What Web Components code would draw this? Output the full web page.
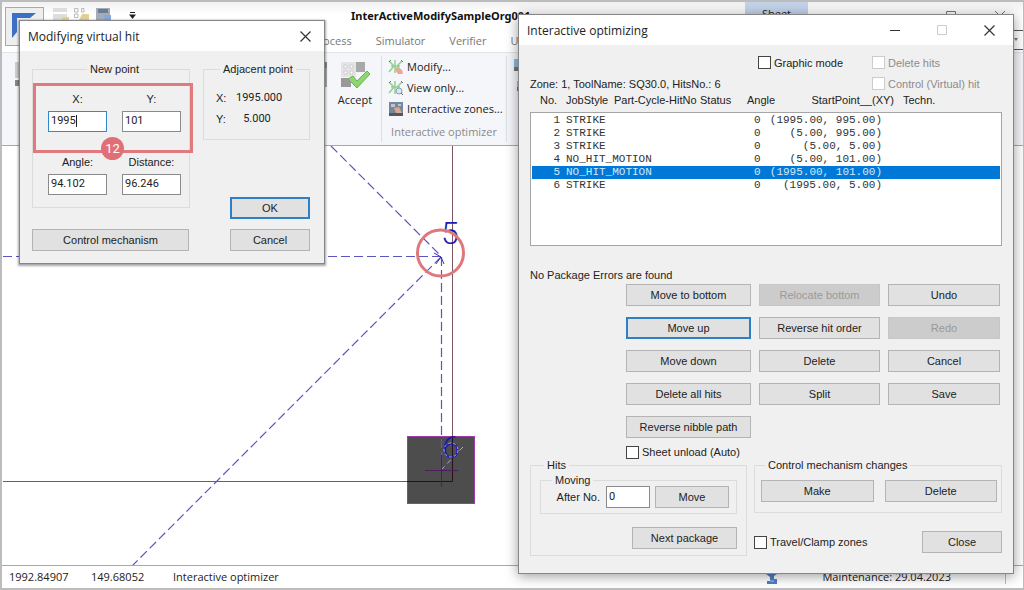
<!DOCTYPE html>
<html lang="en">
<head>
<meta charset="utf-8">
<title>InterActiveModifySampleOrg001</title>
<style>
html,body{margin:0;height:100%;overflow:hidden;background:#fff}
body{font-family:"Liberation Sans",Arial,sans-serif;font-size:11px;line-height:14px;color:#222}
</style>
</head>
<body>
<cam-app></cam-app>
<script>
function define(name, html) {
  const t = document.createElement('template');
  t.innerHTML = html;
  customElements.define(name, class extends HTMLElement {
    constructor() {
      super();
      const root = this.attachShadow({mode: 'open'});
      root.append(t.content.cloneNode(true));
    }
    connectedCallback() {
      const r = this.shadowRoot;
      r.querySelectorAll('[data-text]').forEach(e => e.textContent = this.getAttribute(e.dataset.text) || '');
      r.querySelectorAll('input[data-value]').forEach(e => e.value = this.getAttribute('value') || '');
      if (this.hasAttribute('disabled')) r.querySelectorAll('button,input').forEach(e => e.disabled = true);
    }
  });
}

define('ui-button', `<style>
:host{display:block}
button{display:block;width:100%;height:22px;box-sizing:border-box;margin:0;padding:0;border:1px solid #b4b4b4;border-radius:0;background:#e1e1e1;font:inherit;line-height:18px;color:#222;white-space:nowrap}
:host([primary]) button{border:2px solid #2f7fc4;line-height:16px}
button:disabled{background:#ccc;border-color:#c6c6c6;color:#9a9a9a}
</style><button type="button"><slot></slot></button>`);

define('ui-check', `<style>
:host{display:block}
label{display:flex;align-items:center;gap:3px;white-space:nowrap}
input{appearance:none;width:13px;height:13px;box-sizing:border-box;margin:0;border:1px solid #444;background:#fff;flex:none}
:host([disabled]){color:#8c8c8c}
:host([disabled]) input{border-color:#ccc}
</style><label><input type="checkbox"><slot></slot></label>`);

define('ui-group', `<style>
:host{display:block}
fieldset{margin:0;border:1px solid #dcdcdc;min-width:0;padding:var(--pad,0)}
legend{height:12px;line-height:12px;padding:0 3px;margin-left:var(--indent,4px);white-space:nowrap}
:host([centered]) legend{margin:0 auto}
</style><fieldset><legend data-text="legend"></legend><slot></slot></fieldset>`);

define('ui-field', `<style>
:host{display:flex;flex-direction:column}
label{display:flex;flex-direction:column;gap:5px;text-align:center;white-space:nowrap}
input{width:100%;height:21px;box-sizing:border-box;margin:0;padding:0 2px 2px;border:1px solid #8a8a8a;background:#fff;font:11px Roboto,"Liberation Sans",sans-serif;color:#222;outline:none}
:host([active]) input{border-color:#2f8ad0}
:host([inline]) label{flex-direction:row;align-items:center;gap:6px}
:host([inline]) input{width:44px;height:22px}
.wrap{display:block;position:relative}
.caret{display:none;position:absolute;left:28px;top:4px;width:1px;height:12px;background:#222}
:host([active]) .caret{display:block}
</style><label><span data-text="label"></span><span class="wrap"><input type="text" data-value><i class="caret"></i></span></label>`);

define('ui-window', `<style>
:host{display:block;box-sizing:border-box;background:#f0f0f0;border:1px solid #868686;box-shadow:0 2px 12px rgba(0,0,0,.4)}
:host([closeonly]){box-shadow:0 1px 2px 1px rgba(0,0,0,.35)}
header{display:flex;align-items:center;height:30px;padding-left:8px;background:#fff;font:12px "Open Sans","Noto Sans",sans-serif;color:#222}
h1{flex:1;margin:0;font:inherit;white-space:nowrap}
button{width:47px;height:30px;border:0;padding:0;background:none;color:#333}
:host([closeonly]) button{width:38px}
:host([closeonly]) .extra{display:none}
button:disabled{color:#ccc}
svg{display:block;margin:auto}
</style><header><h1 data-text="heading"></h1>
<button type="button" class="extra" aria-label="Minimize"><svg width="11" height="11"><path d="M0 5.5H10" stroke="currentColor"/></svg></button>
<button type="button" class="extra" aria-label="Maximize" disabled><svg width="11" height="11"><path d="M.5 .5H9.500V9.500H.5Z" fill="none" stroke="currentColor"/></svg></button>
<button type="button" aria-label="Close"><svg width="11" height="11"><path d="M.5 .5L10.500 10.500M10.500 .5L.5 10.500" stroke="currentColor" stroke-width="1.200"/></svg></button>
</header><slot></slot>`);

define('hit-table', `<style>
:host{display:block}
table,thead,tbody{display:block}
tr{display:grid;grid-template-columns:26px 48px 86px 47px 24px 132px 1fr;padding-left:10px;white-space:nowrap}
thead tr{height:12px;line-height:12px;margin-bottom:6px}
th,td{padding:0;text-align:left;font-weight:normal}
th:nth-child(6){text-align:right;padding-right:9px}
tbody{box-sizing:border-box;height:134px;padding:1px;border:1px solid #a5a5a5;background:#fff;font:11px/13px "Liberation Mono","Courier New",monospace;color:#333}
tbody tr{padding-left:8px}
td:first-child{text-align:right;padding-right:6px}
td:nth-child(5){padding-left:7px}
td:nth-child(6){text-align:right;padding-right:21px;margin-left:-20px}
.sel{background:#0078d7;color:#d4e8fa}
</style><table><thead><tr><th>No.</th><th>JobStyle</th><th>Part-Cycle-HitNo</th><th>Status</th><th>Angle</th><th>StartPoint__(XY)</th><th>Techn.</th></tr></thead>
<tbody>
<tr><td>1</td><td>STRIKE</td><td></td><td></td><td>0</td><td>(1995.00, 995.00)</td><td></td></tr>
<tr><td>2</td><td>STRIKE</td><td></td><td></td><td>0</td><td>(5.00, 995.00)</td><td></td></tr>
<tr><td>3</td><td>STRIKE</td><td></td><td></td><td>0</td><td>(5.00, 5.00)</td><td></td></tr>
<tr><td>4</td><td>NO_HIT_MOTION</td><td></td><td></td><td>0</td><td>(5.00, 101.00)</td><td></td></tr>
<tr class="sel"><td>5</td><td>NO_HIT_MOTION</td><td></td><td></td><td>0</td><td>(1995.00, 101.00)</td><td></td></tr>
<tr><td>6</td><td>STRIKE</td><td></td><td></td><td>0</td><td>(1995.00, 5.00)</td><td></td></tr>
</tbody></table>`);

define('optimizer-dialog', `<style>
:host{display:block}
.body{padding:7px 11px 17px}
.options{display:grid;grid-template-columns:1fr 114px 130px;grid-auto-rows:21px;align-items:center}
.options .zone{grid-row:2;white-space:nowrap}
.options .g{grid-column:2;grid-row:1}
.options .d{grid-column:3;grid-row:1}
.options .c{grid-column:3;grid-row:2}
.msg{margin:22px 0 2px}
.actions{display:grid;grid-template-columns:125px 121px 112px;gap:11px 8px;margin-left:96px}
.unload{margin:7px 0 0 96px}
.low{display:grid;grid-template-columns:217px 1fr;gap:7px;align-items:start}
.hits{--pad:0 9px 6px}
.moving{--pad:0 7px 5px;padding-top:3px}
.row{display:flex;justify-content:flex-end;gap:5px}
.row ui-button{width:74px}
.next{width:105px;margin:13px 0 0 auto}
.mech{--pad:9px 4px 10px 6px}
.pair{display:grid;grid-template-columns:1fr 1fr;gap:11px}
.foot{display:flex;justify-content:space-between;align-items:center;margin-top:18px}
.foot ui-button{width:80px}
</style><ui-window heading="Interactive optimizing"><div class="body">
<div class="options"><span class="zone">Zone: 1, ToolName: SQ30.0, HitsNo.: 6</span><ui-check class="g">Graphic mode</ui-check><ui-check class="d" disabled>Delete hits</ui-check><ui-check class="c" disabled>Control (Virtual) hit</ui-check></div>
<hit-table></hit-table>
<div class="msg">No Package Errors are found</div>
<div class="actions">
<ui-button>Move to bottom</ui-button><ui-button disabled>Relocate bottom</ui-button><ui-button>Undo</ui-button>
<ui-button primary>Move up</ui-button><ui-button>Reverse hit order</ui-button><ui-button disabled>Redo</ui-button>
<ui-button>Move down</ui-button><ui-button>Delete</ui-button><ui-button>Cancel</ui-button>
<ui-button>Delete all hits</ui-button><ui-button>Split</ui-button><ui-button>Save</ui-button>
<ui-button>Reverse nibble path</ui-button></div>
<ui-check class="unload">Sheet unload (Auto)</ui-check>
<div class="low">
<ui-group class="hits" legend="Hits"><ui-group class="moving" legend="Moving"><div class="row"><ui-field inline label="After No." value="0"></ui-field><ui-button>Move</ui-button></div></ui-group><ui-button class="next">Next package</ui-button></ui-group>
<div><ui-group class="mech" legend="Control mechanism changes"><div class="pair"><ui-button>Make</ui-button><ui-button>Delete</ui-button></div></ui-group>
<div class="foot"><ui-check>Travel/Clamp zones</ui-check><ui-button>Close</ui-button></div></div>
</div></div></ui-window>`);

define('virtual-hit-dialog', `<style>
:host{display:block}
.body{display:grid;grid-template-columns:158px 107px;gap:13px;padding:12px;position:relative}
.col{display:flex;flex-direction:column}
.new{--pad:17px 8px 12px 15px}
.fields{display:grid;grid-template-columns:59px 59px;gap:23px 15px}
.cm{width:157px;margin-top:21px}
.adj{--pad:16px 12px 13px}
dl{display:grid;grid-template-columns:20px 42px;row-gap:7px;margin:0}
dd{margin:0;text-align:center;font:11px/14px Roboto,"Liberation Sans",sans-serif}
dt{margin:0}
.end{display:grid;gap:10px;margin:auto 0 0 auto;width:80px}
.mark{position:absolute;left:13px;top:32px;width:154px;height:64px;border:3px solid #e07a7e}
.badge{position:absolute;left:81px;top:86px;width:23px;height:23px;border-radius:50%;background:#e07075;color:#fff;font:13px/23px Roboto,"Liberation Sans",sans-serif;text-align:center}
</style><ui-window closeonly heading="Modifying virtual hit"><div class="body">
<div class="col"><ui-group class="new" centered legend="New point"><div class="fields"><ui-field active label="X:" value="1995"></ui-field><ui-field label="Y:" value="101"></ui-field><ui-field label="Angle:" value="94.102"></ui-field><ui-field label="Distance:" value="96.246"></ui-field></div></ui-group><ui-button class="cm">Control mechanism</ui-button></div>
<div class="col"><ui-group class="adj" legend="Adjacent point"><dl><dt>X:</dt><dd>1995.000</dd><dt>Y:</dt><dd>5.000</dd></dl></ui-group><div class="end"><ui-button primary>OK</ui-button><ui-button>Cancel</ui-button></div></div>
<div class="mark"></div><div class="badge">12</div>
</div></ui-window>`);

define('app-header', `<style>
:host{display:grid;grid-template-columns:44px 1fr;height:50px;background:linear-gradient(#f1f1f1,#fff 12px);font-family:"Open Sans","Noto Sans",sans-serif;overflow:hidden}
.file{margin:5px 0 0 3px;width:39px;height:39px;padding:0;border:1px solid #a9a9a9;background:#eee;display:block}
.top{display:flex;height:28px;align-items:center}
.quick{width:305px;display:block;flex:none}
h1{margin:0;font:bold 11px/14px "Noto Sans","Open Sans",sans-serif;color:#111;width:394px;flex:none;white-space:nowrap}
.sheet{width:63px;height:28px;line-height:24px;text-align:center;background:#c3d3ea;color:#222}
.ctl{margin-left:auto;display:flex;gap:38px;margin-right:17px;color:#777}
nav{display:flex;gap:24px;padding-left:266px;height:22px;align-items:center}
a{color:#777;text-decoration:none;white-space:nowrap}
.find{margin-left:auto;width:11px;height:22px;flex:none}
</style>
<button class="file" type="button" aria-label="File"><svg width="37" height="37"><path d="M6 5H30L24 10H11V24L6 30Z" fill="#3d6fc4"/><path d="M14 14H25L20 18H17V22L14 25Z" fill="#8fb2e3"/></svg></button>
<div><div class="top"><svg class="quick" width="305" height="28"><path d="M7 6H21V18H7Z" fill="#ddd"/><path d="M7 11H21" stroke="#fff" stroke-width="2"/><path d="M16 15H23V19H16Z" fill="#e8d08a"/><path d="M28.500 6.500H32V10H28.500ZM35.500 6.500H38V10H35.500ZM28.500 12H32V15.500H28.500Z" fill="none" stroke="#bbb"/><path d="M36 12H43V18H33Z" fill="#e3cf98"/><path d="M50 6H64V18H50Z" fill="#a6acb7"/><path d="M52 7H62V11H52Z" fill="#6c7b94"/><path d="M58 13H65V19H58Z" fill="#86a7de"/><path d="M84 10.500H89" stroke="#222"/><path d="M83 12.500H90L86.500 17Z" fill="#222"/></svg><h1>InterActiveModifySampleOrg001</h1><div class="sheet">Sheet</div><div class="ctl"><svg width="11" height="11"><path d="M.5 .5H9.500V9.500H.5Z" fill="none" stroke="currentColor"/></svg><svg width="11" height="11"><path d="M0 0L10 10M10 0L0 10" stroke="currentColor"/></svg></div></div>
<nav><a href="#process">Process</a><a href="#simulator">Simulator</a><a href="#verifier">Verifier</a><a href="#un">Un</a><svg class="find" width="11" height="22"><path d="M0 .5H11M0 19.500H11" stroke="#555"/><path d="M2 8H6L4 11Z" fill="#777"/></svg></nav></div>`);

define('app-ribbon', `<style>
:host{display:flex;height:94px;box-sizing:border-box;border-top:1px solid #e2e4e8;border-bottom:1px solid #a8a8a8;background:#f5f6f9;font-family:"Open Sans","Noto Sans",sans-serif;padding-right:9px}
button{border:0;background:none;padding:0;margin:0;font:inherit;color:#222;display:flex;align-items:center;white-space:nowrap}
.lead{width:327px;flex:none;display:flex;justify-content:space-between;padding-top:9px;box-sizing:border-box}
.accept{flex-direction:column;width:52px;gap:4px;padding-top:8px;align-self:flex-start}
.group{border:solid #dedfe3;border-width:0 1px;margin:3px 0;padding:0 6px;width:112px}
.group button{height:21px;gap:3px}
.title{color:#8a8a8a;line-height:14px;margin-top:6px;text-align:center;white-space:nowrap}
.more{padding:4px 7px}
</style>
<div class="lead"><svg width="20" height="70"><path d="M13 0H20V16H13Z" fill="#ccc"/><path d="M13 18H20V24H13Z" fill="#888"/></svg><svg width="14" height="40"><path d="M0 0H12V25H0Z" fill="#aaa"/><path d="M0 0H12V6H0Z" fill="#888"/></svg></div>
<button class="accept" type="button"><svg width="30" height="28"><path d="M1 1H16V16H1Z" fill="#e4e4e4"/><path d="M4 4H7V7H4ZM10 4H13V7H10ZM4 10H7V13H4ZM10 10H13V13H10Z" fill="#fff" stroke="#ccc"/><path d="M16 1H25V11H16Z" fill="#a9a9a9"/><path d="M1 17H11V26H1Z" fill="#999"/><path d="M8 18L13 15L17 20L27 10L30 13L17 27Z" fill="#8dd672" stroke="#63b64c"/></svg>Accept</button>
<div class="group">
<button type="button"><svg width="16" height="16"><path d="M1 2L6 7L1 13M14 2L9 7L14 13M7 1V14M3 7H12" fill="none" stroke="#94cf94" stroke-width="1.500"/><path d="M1 3L3 1M13 1L15 3" stroke="#777"/><path d="M8 8L14 11L15 15H10L7 11Z" fill="#eaa797"/></svg>Modify...</button>
<button type="button"><svg width="16" height="16"><path d="M1 2L6 7L1 13M14 2L9 7L14 13M7 1V14M3 7H12" fill="none" stroke="#94cf94" stroke-width="1.500"/><path d="M1 3L3 1M13 1L15 3" stroke="#777"/><circle cx="11" cy="11" r="3" fill="#d8e8f4" stroke="#889fb2"/><path d="M13 13L15 15" stroke="#667"/></svg>View only...</button>
<button type="button"><svg width="16" height="16"><path d="M1 1H15V15H1Z" fill="#78869a"/><path d="M3 3H7V6H3ZM10 3H13V5H10Z" fill="#b8c8da"/><path d="M1 12H15V15H1Z" fill="#505866"/><path d="M6 7L11 6L14 12H8Z" fill="#dda58d"/></svg>Interactive zones...</button>
<div class="title">Interactive optimizer</div></div>
<svg class="more" width="16" height="50"><path d="M0 2H16V10H0Z" fill="#8fbae0"/><path d="M0 10H16V14H0Z" fill="#777"/><path d="M3 24H16V30H3Z" fill="#bbb"/><path d="M3 30H16V34H3Z" fill="#777"/></svg>`);

define('sheet-canvas', `<style>
:host{display:block;flex:1;min-height:0;overflow:hidden;background:#fff;border-bottom:1px solid #a8a8a8}
svg{display:block;width:100%;height:100%}
text{font:300 32px Roboto,"Liberation Sans",sans-serif;fill:#1a1ab0;stroke:none}
</style>
<svg><g transform="translate(-2 -146)" fill="none">
<rect x="407.500" y="436.500" width="67" height="67" fill="#4d4d4d" stroke="#a03aa8"/>
<path d="M3 481.500H407M452.500 146V436" stroke="#7b5560"/><path d="M407 481.500H452.500V436" stroke="#241418"/>
<g stroke="#5a55c0" stroke-width="1.200" stroke-dasharray="9 4"><path d="M331 146L441 256"/><path d="M3 256.500H441"/><path d="M441.500 257V470"/><path d="M441 257L132 566"/></g>
<path d="M441 257L434 253M441 257L436 264M441 257L444 264" stroke="#3a35a8"/>
<path d="M420 449L441 470" stroke="#4a3f9e" stroke-dasharray="5 4"/><path d="M441 470L463 447" stroke="#aaa6e6" stroke-dasharray="5 4"/>
<path d="M425 470.500H458M441.500 455V487" stroke="#4f1c60"/>
<text x="441" y="244">5</text><text x="442" y="458">6</text>
<circle cx="451" cy="450" r="7" stroke="#a9a6ec" stroke-dasharray="3 2"/>
<circle cx="440.500" cy="253" r="23" stroke="#e0777c" stroke-width="3"/>
</g></svg>`);

define('status-bar', `<style>
:host{display:flex;align-items:center;height:22px;padding:0 17px 0 7px;background:#fff;font-family:"Open Sans","Noto Sans",sans-serif;white-space:nowrap}
.n{width:82px}
.m{flex:1}
.key{margin-right:44px}
.maint{padding-right:54px;border-right:1px solid #a9c0e4}
</style><span class="n">1992.84907</span><span class="n">149.68052</span><span class="m">Interactive optimizer</span>
<svg class="key" width="13" height="16"><path d="M1 1H12V5L9 7V10H12V15H2V12H5V8L1 5Z" fill="#4e7fc6"/><path d="M4 4H9M5 12H9" stroke="#b9d0ef"/></svg><span class="maint">Maintenance: 29.04.2023</span>`);

define('cam-app', `<style>
:host{display:flex;flex-direction:column;position:relative;height:100vh;box-sizing:border-box;border:2px solid #bcbcbc;border-width:2px 1px 2px 2px;background:#fff;overflow:hidden}
virtual-hit-dialog{position:absolute;left:17px;top:18px;width:306px}
optimizer-dialog{position:absolute;right:9px;top:12px;width:496px}
</style><app-header></app-header><app-ribbon></app-ribbon><sheet-canvas></sheet-canvas><status-bar></status-bar>
<virtual-hit-dialog></virtual-hit-dialog><optimizer-dialog></optimizer-dialog>`);
</script>
</body>
</html>
